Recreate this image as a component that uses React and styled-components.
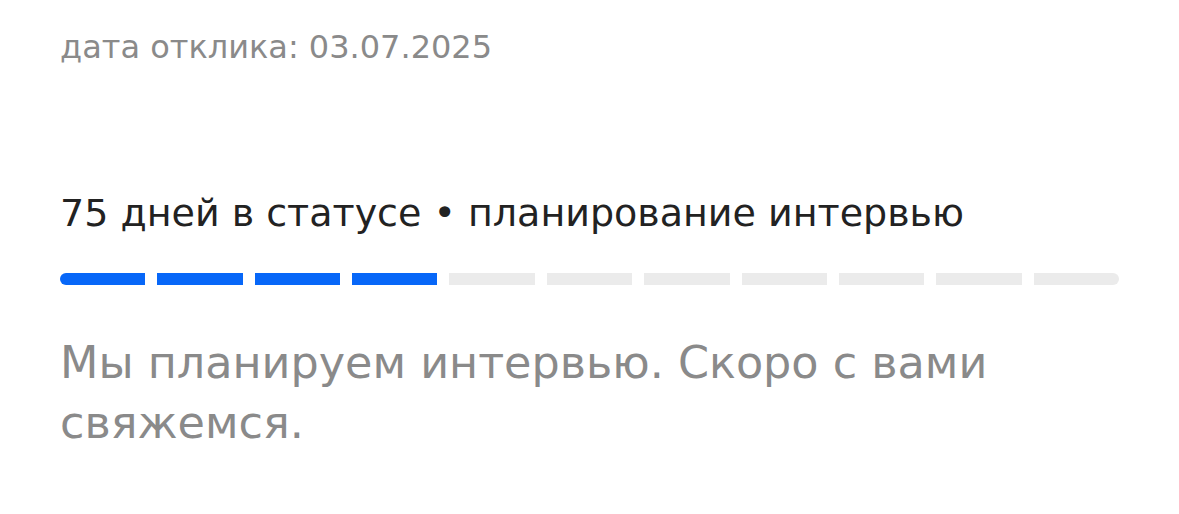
import styled, { createGlobalStyle } from "styled-components";

const GlobalStyle = createGlobalStyle`
  html, body {
    margin: 0;
    padding: 0;
    background: #fff;
  }
  body {
    font-family: "DejaVu Sans", "Noto Sans", sans-serif;
    -webkit-font-smoothing: antialiased;
  }
`;

const Card = styled.section`
  width: 1179px;
  height: 514px;
  box-sizing: border-box;
  padding: 22px 60px 0 60px;
  overflow: hidden;
  background: #fff;
`;

const Meta = styled.div`
  font-size: 32px;
  line-height: 50px;
  color: #8a8a8a;
`;

const Status = styled.div`
  margin-top: 116px;
  font-size: 38px;
  line-height: 50px;
  color: #222;
`;

const Bar = styled.div`
  display: grid;
  grid-template-columns: repeat(${(p) => p.$total}, 1fr);
  gap: 12px;
  width: 1059px;
  margin-top: 35px;
`;

const Step = styled.div`
  height: 12px;
  background: ${(p) => (p.$done ? "#0767f8" : "#ebebeb")};

  &:first-child {
    border-radius: 6px 0 0 6px;
  }
  &:last-child {
    border-radius: 0 6px 6px 0;
  }
`;

const Note = styled.p`
  margin: 48px 0 0;
  width: 960px;
  font-size: 44.5px;
  line-height: 60px;
  color: #8a8a8a;
`;

const TOTAL = 11;
const DONE = 4;

export default function App() {
  return (
    <>
      <GlobalStyle />
      <Card>
        <Meta>дата отклика: 03.07.2025</Meta>
        <Status>75 дней в статусе • планирование интервью</Status>
        <Bar $total={TOTAL}>
          {Array.from({ length: TOTAL }, (_, i) => (
            <Step key={i} $done={i < DONE} />
          ))}
        </Bar>
        <Note>Мы планируем интервью. Скоро с вами свяжемся.</Note>
      </Card>
    </>
  );
}
